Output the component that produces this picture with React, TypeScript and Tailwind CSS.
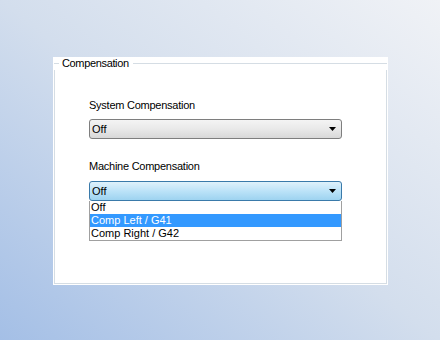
import React from "react";

const font = { fontFamily: '"Liberation Sans", Arial, sans-serif' };

function Arrow() {
  return (
    <svg width="7" height="4" viewBox="0 0 7 4" className="block">
      <path d="M0 0 H7 L3.5 4 Z" fill="#000" />
    </svg>
  );
}

export default function App() {
  return (
    <div
      className="w-[440px] h-[340px] overflow-hidden bg-linear-to-tr from-[#a4bfe6] via-[#d3deed] to-[#f0f2f6] pt-[57px] pl-[53px] text-[10.5px] leading-[13px] text-black"
      style={font}
    >
      <div className="w-[335px] h-[228px] bg-white flex flex-col px-[1px] pb-[1px]">
        <div className="flex items-center h-[13px]">
          <div className="w-[5px] h-px bg-[#d5dde4]" />
          <div className="pl-[3px] pr-[4px] text-[11px] tracking-[-0.35px]">Compensation</div>
          <div className="flex-1 h-px bg-[#d5dde4]" />
        </div>
        <div className="flex-1 border-x border-b border-[#d5dde4] pl-[34px] pt-[29px] flex flex-col">
          <div className="h-[13px] text-[11px] tracking-[-0.25px]">System Compensation</div>
          <div className="mt-[7px] w-[253px] h-[20px] rounded-[3px] border border-[#7e7e7e] bg-linear-to-b from-[#f4f4f4] via-[#e9e9e9] to-[#d8d8d8] flex items-center justify-between pl-[2px] pr-[5px] text-[11px]">
            <span>Off</span>
            <Arrow />
          </div>
          <div className="mt-[21px] h-[13px] text-[11px] tracking-[-0.25px]">Machine Compensation</div>
          <div className="mt-[8px] w-[253px] h-[20px] rounded-[3px] border border-[#3a7aaa] bg-linear-to-b from-[#dff1fb] via-[#bce3f8] to-[#9dd3f0] flex items-center justify-between pl-[2px] pr-[5px] text-[11px]">
            <span>Off</span>
            <Arrow />
          </div>
          <div className="w-[253px] border border-t-0 border-[#a0a0a0] bg-white flex flex-col text-[11px]">
            <div className="h-[13px] pl-[1px]">Off</div>
            <div className="h-[13px] pl-[1px] bg-[#3399ff] text-white">Comp Left / G41</div>
            <div className="h-[13px] pl-[1px]">Comp Right / G42</div>
          </div>
        </div>
      </div>
    </div>
  );
}
